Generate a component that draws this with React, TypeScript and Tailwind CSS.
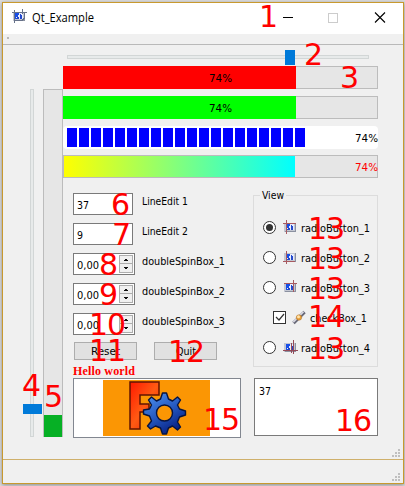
import React from 'react';

const ui = "font-['DejaVu_Sans',sans-serif]";

function Label({ children, width, className = '' }: { children: string; width: number; className?: string }) {
  return (
    <svg width={width} height="16" className={`shrink-0 overflow-visible ${className}`}>
      <text x="0" y="12" textLength={width} lengthAdjust="spacingAndGlyphs" fill="currentColor" className="font-['DejaVu_Sans_Condensed','DejaVu_Sans',sans-serif] text-[11px] [font-stretch:condensed]">
        {children}
      </text>
    </svg>
  );
}

function Part({ kind = 0 }: { kind?: number }) {
  return (
    <svg width="15" height="15" viewBox="0 0 15 15" shapeRendering="crispEdges">
      <rect x="1" y="3" width="12" height="9" fill="#c3c6d1" />
      <path d="M2 11h11v1H2zM12 3h1v8h-1z" fill="#8b91a0" />
      <path d="M3 4h8v6H3z" fill="#e8ecfa" />
      <path d="M3 4h4v2H6v2H4v2H3z" fill="#174ee8" />
      <path d="M5 8h2v2H4V9h1zM8 5h1v1h1v4H8z" fill="#2348cc" />
      {kind === 0 && <path d="M0 3.5h13M3.5 0v14" stroke="#a85a60" />}
      {kind === 1 && <path d="M0 11.5h12M3.5 1v13" stroke="#a85a60" />}
      {kind === 2 && <path d="M1 3.5h13M10.5 0v12" stroke="#a85a60" />}
      {kind === 3 && <path d="M0 10.5h15M10.5 0v14M8.5 3v10" stroke="#944a58" />}
      {kind === 4 && <path d="M0 3.5h15M2.5 1v13M10.5 0v5M2 11.5h8l2-2v-6" stroke="#67728a" fill="none" />}
    </svg>
  );
}

function Wand() {
  return (
    <svg width="15" height="15" viewBox="0 0 15 15">
      <path d="M1.5 13L12.5 2" stroke="#656675" strokeWidth="3.4" />
      <path d="M1.2 12L11.5 1.7" stroke="#d6d6df" strokeWidth="1.8" />
      <circle cx="7" cy="7.5" r="2.7" fill="#e9a139" stroke="#a66928" strokeWidth=".5" />
      <circle cx="6.5" cy="6.7" r="1.5" fill="#ffe3ab" />
    </svg>
  );
}

function Progress({ color }: { color: string }) {
  return (
    <div className="relative h-[23px] border border-[#bcbcbc] bg-[#e6e6e6]">
      <div className={`absolute -left-px -top-px h-[23px] w-[233px] ${color}`} />
      <Label width={23} className="absolute left-[145px] top-[3px]">74%</Label>
    </div>
  );
}

function Spin({ name }: { name: string }) {
  return (
    <div className="flex h-[22px]">
      <div className="flex h-[22px] w-[62px] border border-[#7a7a7a] bg-white pl-[3px]">
        <Label width={22} className="mt-[3px]">0,00</Label>
        <div className="ml-auto mr-px mt-px flex h-[18px] w-[14px] flex-col border border-[#adadad] bg-[#f0f0f0]">
          <svg width="12" height="16" shapeRendering="crispEdges">
            <path d="M0 7.5h12" stroke="#adadad" />
            <path d="M5 3h2v1h1v1H4V4h1zM4 11h4v1H7v1H5v-1H4z" fill="#111" />
          </svg>
        </div>
      </div>
      <Label width={83} className="ml-[7px]">{name}</Label>
    </div>
  );
}

function Edit({ value, name }: { value: string; name: string }) {
  return (
    <div className="flex h-[22px]">
      <div className="h-[22px] w-[60px] border border-[#7a7a7a] bg-white pl-[3px] pt-[3px]">
        <Label width={value.length * 6}>{value}</Label>
      </div>
      <Label width={46} className="ml-[9px]">{name}</Label>
    </div>
  );
}

function Radio({ name, kind, checked = false }: { name: string; kind: number; checked?: boolean }) {
  return (
    <div className="flex h-[30px] items-center">
      <span className="flex size-[13px] items-center justify-center rounded-full border border-[#333] bg-white">
        {checked && <span className="size-[7px] rounded-full bg-[#333]" />}
      </span>
      <span className="ml-[7px] mr-[3px]"><Part kind={kind} /></span>
      <Label width={69} className="mt-[2px]">{name}</Label>
    </div>
  );
}

function Grip() {
  return (
    <svg width="8" height="8" fill="#bfbfbf" shapeRendering="crispEdges">
      <path d="M6 0h2v2H6zM3 3h2v2H3zM6 3h2v2H6zM0 6h2v2H0zM3 6h2v2H3zM6 6h2v2H6z" />
    </svg>
  );
}

function Logo() {
  return (
    <svg width="107" height="56" viewBox="0 0 107 56">
      <defs>
        <linearGradient id="metal" x2="1" y2="1"><stop stopColor="#ff1900" /><stop offset=".5" stopColor="#ff5a13" /><stop offset="1" stopColor="#e92100" /></linearGradient>
        <linearGradient id="gear" x1=".2" x2=".8" y2="1"><stop stopColor="#4a8eed" /><stop offset=".5" stopColor="#2355bd" /><stop offset="1" stopColor="#001578" /></linearGradient>
      </defs>
      <rect width="107" height="56" fill="#fb9604" />
      <path d="M27 2h29v13H37v9h9v8h-9v17H27z" fill="url(#metal)" stroke="#631500" strokeWidth="1.5" />
      <g transform="translate(61.5 33)" fill="url(#gear)" stroke="#071441" strokeWidth="1.4" strokeLinejoin="round">
        <path fillRule="evenodd" d="M-2-20L2-20 4-14 8-12 13-16 16-13 13-8 15-4 21-2 21 2 15 4 13 9 16 14 13 17 8 13 4 15 2 21-2 21-4 15-9 13-14 16-17 13-13 8-15 3-21 1-21-3-15-4-13-8-16-13-13-16-8-12-4-14zM8 0A8 8 0 1 0-8 0A8 8 0 1 0 8 0" />
      </g>
    </svg>
  );
}

const notes = [
  ['1', 259, 27], ['2', 304, 65], ['3', 340, 88], ['4', 22, 396], ['5', 44, 407],
  ['6', 111, 215], ['7', 112, 245], ['8', 99, 275], ['9', 99, 305], ['10', 89, 335],
  ['11', 89, 361], ['12', 168, 362], ['13', 308, 239], ['13', 308, 269], ['13', 308, 299],
  ['14', 308, 327], ['13', 308, 359], ['15', 203, 430], ['16', 335, 431],
] as const;

export default function App() {
  return (
    <main className={`relative h-[486px] w-[405px] overflow-hidden bg-[#dedede] pl-[2px] pt-[2px] text-black ${ui}`}>
      <section className="flex h-[482px] w-[402px] flex-col border border-[#c8992e] bg-[#f0f0f0] shadow-[0_1px_4px_#888]">
        <header className="flex h-[31px] shrink-0 items-center bg-white pl-[9px]">
          <span className="mb-1"><Part kind={4} /></span>
          <svg width="62" height="20" className="mb-[3px] ml-[5px] overflow-visible">
            <text x="0" y="15" textLength="62" lengthAdjust="spacingAndGlyphs" className="font-['Open_Sans','Noto_Sans',sans-serif] text-[12px]">Qt_Example</text>
          </svg>
          <svg width="103" height="11" className="mb-[3px] ml-auto mr-[17px]" fill="none" shapeRendering="crispEdges">
            <path d="M0 5.5h10" stroke="#000" />
            <path d="M45.5 1.5h9v9h-9z" stroke="#ccc" />
            <path d="M92 .5l10 10M102 .5l-10 10" stroke="#000" strokeWidth="1.1" shapeRendering="auto" />
          </svg>
        </header>
        <div className="h-[11px] shrink-0 border-b border-[#b9b9b9] pl-[4px] pt-[3px]"><div className="size-[2px] bg-[#b8b8b8]" /></div>
        <div className="flex h-[414px] shrink-0">
          <div className="flex pl-5 pt-[44px]">
            <div className="relative w-5">
              <div className="ml-[7px] h-[348px] w-[4px] border border-[#d2d6d6] bg-[#e7eaea]" />
              <div className="absolute left-0 top-[315px] h-[10px] w-[19px] bg-[#007ad9]" />
            </div>
            <div className="flex h-[348px] w-5 flex-col justify-end border border-b-0 border-[#bcbcbc] bg-[#e6e6e6]"><div className="h-[22px] bg-[#06b025]" /></div>
          </div>
          <div className="w-[315px]">
            <div className="relative h-[21px] pl-1 pt-[10px]">
              <div className="h-[4px] w-[302px] border border-[#d2d6d6] bg-[#e7eaea]" />
              <div className="absolute left-[222px] top-[5px] h-[15px] w-[10px] bg-[#007ad9]" />
            </div>
            <div className="flex flex-col gap-[7px]">
              <Progress color="bg-[#ff0000]" />
              <Progress color="bg-[#00ff00]" />
              <div className="flex h-[23px] items-center rounded-[4px] bg-white pl-[4px]">
                <div className="flex gap-[2px]">{Array.from({ length: 20 }, (_, i) => <i key={i} className="h-[19px] w-[10px] bg-[#0000ff]" />)}</div>
                <Label width={23} className="ml-auto">74%</Label>
              </div>
              <div className="-mt-px flex h-[23px] items-center border border-[#bcbcbc] bg-[#e6e6e6]">
                <div className="h-[21px] w-[231px] bg-[linear-gradient(90deg,#ffff00,#00ffff)]" />
                <Label width={23} className="-mr-px ml-auto text-[#ff0000]">74%</Label>
              </div>
            </div>
            <div className="flex h-[200px] pt-[13px]">
              <div className="w-[190px] pl-[10px] pt-[2px]">
                <div className="flex flex-col gap-2">
                  <Edit value="37" name="LineEdit 1" /><Edit value="9" name="LineEdit 2" />
                  <Spin name="doubleSpinBox_1" /><Spin name="doubleSpinBox_2" /><Spin name="doubleSpinBox_3" />
                </div>
                <div className="mt-[7px] flex gap-[17px] pl-px">
                  <button className="flex h-[18px] w-[63px] items-center justify-center border border-[#adadad] bg-[#e1e1e1]"><Label width={29}>Reset</Label></button>
                  <button className="flex h-[18px] w-[63px] items-center justify-center border border-[#adadad] bg-[#e1e1e1]"><Label width={20}>Quit</Label></button>
                </div>
                <svg width="62" height="18" className="overflow-visible"><text x="0" y="15" textLength="62" fill="#f00" fontWeight="bold" className="font-['Liberation_Serif',serif] text-[12px]">Hello world</text></svg>
              </div>
              <fieldset className="relative mt-[4px] h-[172px] w-[125px] border border-[#dcdcdc] pl-[9px] pt-[16px]">
                <span className="absolute left-[6px] top-[-9px] bg-[#f0f0f0] px-[2px]"><Label width={22}>View</Label></span>
                <Radio name="radioButton_1" kind={0} checked />
                <Radio name="radioButton_2" kind={1} />
                <Radio name="radioButton_3" kind={2} />
                <div className="flex h-[30px] items-center pl-[10px]">
                  <span className="size-[13px] border border-[#333] bg-white"><svg width="11" height="11" fill="none" stroke="#333" strokeWidth="1.2"><path d="M2 5l3 3 5-6" /></svg></span>
                  <span className="ml-[6px] mr-[3px]"><Wand /></span><Label width={57} className="mt-[2px]">checkBox_1</Label>
                </div>
                <Radio name="radioButton_4" kind={3} />
              </fieldset>
            </div>
            <div className="flex gap-[13px] pl-[10px]">
              <div className="h-[60px] w-[168px] border border-[#828790] bg-white pl-[29px] pt-px"><Logo /></div>
              <div className="h-[58px] w-[124px] border border-[#7a7a7a] bg-white pl-[4px] pt-[4px]"><Label width={12}>37</Label></div>
            </div>
          </div>
          <div className="mb-[2px] ml-auto mr-[3px] mt-auto"><Grip /></div>
        </div>
        <footer className="flex grow items-end justify-end border-t border-[#cfb06b] pb-[2px] pr-[3px]"><Grip /></footer>
      </section>
      <svg width="405" height="486" className="pointer-events-none absolute left-0 top-0" fill="#f00">
        {notes.map(([text, x, y], i) => <text key={i} x={x} y={y} className="text-[30px] tracking-[-1px]">{text}</text>)}
      </svg>
    </main>
  );
}
